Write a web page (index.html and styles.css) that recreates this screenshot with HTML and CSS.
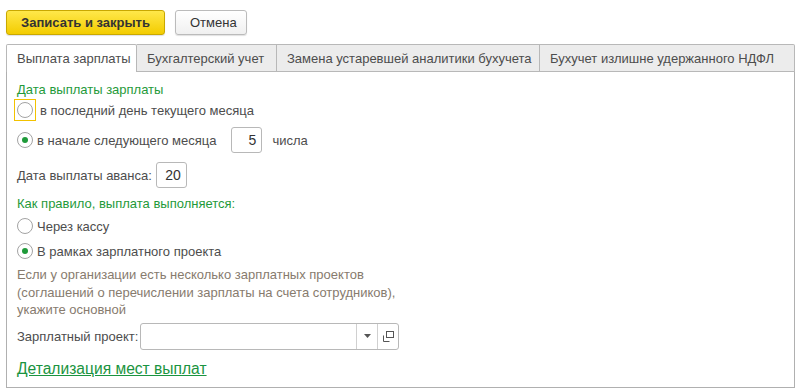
FILE: index.html
```html
<!DOCTYPE html>
<html lang="ru">
<head>
    <meta charset="UTF-8">
    <title>Настройки выплаты зарплаты</title>
    <link rel="stylesheet" href="styles.css">
</head>
<body>
    <div class="toolbar">
        <button class="btn btn-main">Записать и закрыть</button>
        <button class="btn">Отмена</button>
    </div>

    <div class="tabs">
        <div class="tab active">Выплата зарплаты</div>
        <div class="tab">Бухгалтерский учет</div>
        <div class="tab">Замена устаревшей аналитики бухучета</div>
        <div class="tab">Бухучет излишне удержанного НДФЛ</div>
        <div class="tab-rest"></div>
    </div>

    <div class="panel">
        <div class="group-title">Дата выплаты зарплаты</div>
        <div class="row row-first">
            <span class="focus"><span class="radio"></span></span>
            <span class="label">в последний день текущего месяца</span>
        </div>
        <div class="row row-next">
            <span class="radio checked"></span>
            <span class="label">в начале следующего месяца</span>
            <span class="num num-day">5</span>
            <span class="label">числа</span>
        </div>
        <div class="row row-adv">
            <span class="label">Дата выплаты аванса:</span>
            <span class="num num-adv">20</span>
        </div>

        <div class="group-title group-second">Как правило, выплата выполняется:</div>
        <div class="row row-small">
            <span class="radio"></span>
            <span class="label">Через кассу</span>
        </div>
        <div class="row row-small">
            <span class="radio checked"></span>
            <span class="label">В рамках зарплатного проекта</span>
        </div>

        <div class="hint">
            Если у организации есть несколько зарплатных проектов<br>
            (соглашений о перечислении зарплаты на счета сотрудников),<br>
            укажите основной
        </div>

        <div class="row row-combo">
            <span class="label">Зарплатный проект:</span>
            <span class="combo">
                <span class="combo-text"></span>
                <span class="combo-btn">
                    <svg width="7" height="4" viewBox="0 0 7 4"><path d="M0 0h7L3.5 4z" fill="#555"/></svg>
                </span>
                <span class="combo-btn">
                    <svg width="11" height="11" viewBox="0 0 11 11" fill="none" stroke="#555">
                        <rect x="3.5" y="0.5" width="7" height="6"/>
                        <path d="M0.5 4.5v6h6"/>
                    </svg>
                </span>
            </span>
        </div>

        <a class="link" href="#">Детализация мест выплат</a>
    </div>
</body>
</html>
```

FILE: styles.css
```css
body {
    margin: 0;
    padding: 10px 7px 3px 6px;
    font-family: Arial, "Liberation Sans", sans-serif;
    font-size: 13px;
    color: #4d4d4d;
    background: #fff;
}
.toolbar {
    display: flex;
    gap: 10px;
    height: 25px;
}
.btn {
    font-family: inherit;
    font-size: 13px;
    color: #333;
    height: 25px;
    padding: 0 14px;
    border: 1px solid #bbb;
    border-radius: 3px;
    background: linear-gradient(#fff, #f0f0f0);
    box-shadow: 0 1px 1px rgba(0, 0, 0, 0.12);
}
.btn-main {
    width: 159px;
    font-weight: bold;
    border-color: #c9a800;
    background: linear-gradient(#ffe84a, #f3cc00);
}
.btn + .btn {
    width: 72px;
}
.tabs {
    display: flex;
    margin-top: 9px;
    height: 28px;
}
.tab {
    box-sizing: border-box;
    height: 28px;
    padding: 0 10px;
    line-height: 27px;
    background: #ececec;
    border: 1px solid #b8b8b8;
    border-left: none;
    white-space: nowrap;
}
.tab:first-child {
    border-left: 1px solid #b8b8b8;
}
.tab.active {
    background: #fff;
    border-bottom: none;
    border-radius: 2px 2px 0 0;
    width: 131px;
}
.tab:nth-child(2) { width: 140px; }
.tab:nth-child(3) { width: 263px; }
.tab:nth-child(4) { width: 255px; border-radius: 0 2px 0 0; }
.tab-rest {
    flex: 1;
    border-bottom: 1px solid #b8b8b8;
}
.panel {
    box-sizing: border-box;
    width: 789px;
    height: 316px;
    border: 1px solid #b0b0b0;
    border-top: none;
    padding: 10px 10px 0 10px;
}
.group-title {
    color: #1f9a3a;
    height: 16px;
    line-height: 16px;
}
.group-second {
    margin-top: 8px;
}
.row {
    display: flex;
    align-items: center;
    height: 26px;
}
.row-first {
    margin-top: 1px;
    height: 22px;
}
.row-next {
    margin-top: 6px;
}
.row-adv {
    margin-top: 9px;
}
.row-small {
    margin-top: 3px;
    height: 22px;
}
.focus {
    box-sizing: border-box;
    display: flex;
    align-items: center;
    justify-content: center;
    width: 22px;
    height: 22px;
    margin-left: -3px;
    margin-right: -3px;
    border: 1px solid #f2c200;
}
.radio {
    box-sizing: border-box;
    display: inline-flex;
    align-items: center;
    justify-content: center;
    width: 16px;
    height: 16px;
    border: 1px solid #a3a3a3;
    border-radius: 50%;
    background: #fff;
    margin-right: 4px;
}
.focus .radio {
    margin-right: 0;
}
.focus + .label {
    margin-left: 7px;
}
.radio.checked::after {
    content: "";
    width: 6px;
    height: 6px;
    border-radius: 50%;
    background: #1f9a3a;
}
.num {
    box-sizing: border-box;
    display: inline-block;
    height: 26px;
    line-height: 24px;
    padding-right: 5px;
    text-align: right;
    border: 1px solid #b8b8b8;
    border-radius: 3px;
    color: #333;
    font-size: 14px;
}
.num-day {
    width: 31px;
    margin: 0 10px 0 15px;
}
.num-adv {
    width: 31px;
    margin-left: 4px;
}
.hint {
    margin-top: 4px;
    color: #877b6e;
    line-height: 17.5px;
}
.row-combo {
    margin-top: 4px;
    height: 27px;
}
.combo {
    box-sizing: border-box;
    display: flex;
    width: 259px;
    height: 27px;
    margin-left: 2px;
    border: 1px solid #b8b8b8;
    border-radius: 3px;
}
.combo-text {
    flex: 1;
}
.combo-btn {
    width: 20px;
    display: flex;
    align-items: center;
    justify-content: center;
    border-left: 1px solid #d0d0d0;
}
.link {
    display: inline-block;
    margin-top: 10px;
    color: #1a9440;
    font-size: 15.6px;
    line-height: 18px;
    text-decoration: underline;
}
```
